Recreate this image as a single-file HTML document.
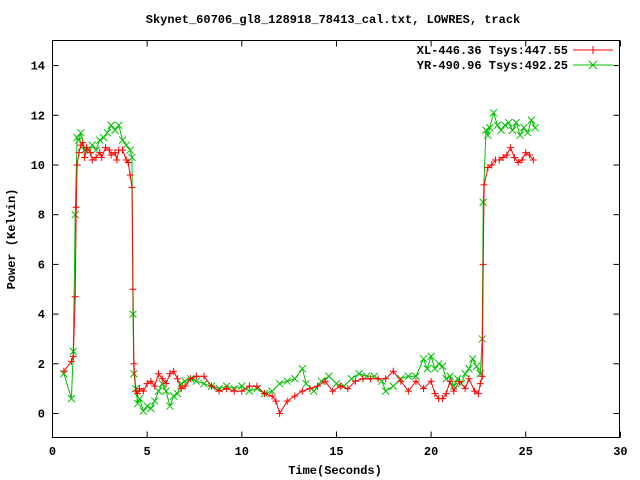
<!DOCTYPE html>
<html><head><meta charset="utf-8"><style>
html,body{margin:0;padding:0;background:#fff;}
svg{display:block;}
text{font-family:"Liberation Mono","DejaVu Sans Mono",monospace;font-size:12px;font-weight:bold;fill:#000;}
</style></head><body>
<svg id="s" width="640" height="480" xmlns="http://www.w3.org/2000/svg">
<rect width="640" height="480" fill="#fff"/>
<text x="333" y="23" text-anchor="middle">Skynet_60706_gl8_128918_78413_cal.txt, LOWRES, track</text>
<text x="335" y="474" text-anchor="middle">Time(Seconds)</text>
<text transform="translate(15,239) rotate(-90)" text-anchor="middle">Power (Kelvin)</text>
<g id="ax" stroke="#000" stroke-width="1" fill="none"></g>
<g id="lab"></g>
<g id="data"></g>
<text x="568" y="54" text-anchor="end">XL-446.36 Tsys:447.55</text>
<text x="568" y="69" text-anchor="end">YR-490.96 Tsys:492.25</text>
</svg>
<script>
var X0=52.5,XS=18.93,Y0=413.5,YS=24.85;
function px(t){return X0+t*XS} function py(v){return Y0-v*YS}
var ns="http://www.w3.org/2000/svg";
function el(p,n,a){var e=document.createElementNS(ns,n);for(var k in a)e.setAttribute(k,a[k]);p.appendChild(e);return e;}
var ax=document.getElementById('ax'),lab=document.getElementById('lab'),dg=document.getElementById('data');
el(ax,'rect',{x:52.5,y:40.5,width:567,height:397});
for(var v=0;v<=14;v+=2){var y=py(v);el(ax,'line',{x1:52.5,y1:y,x2:58.5,y2:y});el(ax,'line',{x1:619.5,y1:y,x2:613.5,y2:y});
var t=el(lab,'text',{x:45,y:y+4,'text-anchor':'end'});t.textContent=v;}
for(var s=0;s<=30;s+=5){var x=px(s);el(ax,'line',{x1:x,y1:437.5,x2:x,y2:431.5});el(ax,'line',{x1:x,y1:40.5,x2:x,y2:46.5});
var t=el(lab,'text',{x:x,y:455,'text-anchor':'middle'});t.textContent=s;}
var red=[0.6,1.7,1.0,2.1,1.1,2.3,1.2,4.7,1.25,8.3,1.3,10.0,1.4,10.5,1.5,10.8,1.6,10.9,1.7,10.3,1.8,10.7,2.0,10.5,2.1,10.2,2.3,10.3,2.5,10.5,2.6,10.3,2.8,10.7,3.0,10.6,3.1,10.4,3.3,10.5,3.4,10.2,3.5,10.6,3.7,10.6,3.9,10.2,4.0,10.1,4.1,9.6,4.2,9.1,4.25,5,4.3,2.0,4.4,0.9,4.5,0.8,4.6,1.0,4.8,0.9,5.0,1.2,5.2,1.3,5.4,1.1,5.6,1.6,5.8,1.4,6.0,1.2,6.2,1.6,6.4,1.7,6.6,1.4,6.8,1.0,7.0,1.1,7.3,1.4,7.6,1.5,8.0,1.5,8.4,1.1,8.8,0.9,9.2,1.0,9.6,0.9,10.0,0.9,10.4,1.1,10.8,1.1,11.2,0.8,11.6,0.7,11.8,0.5,12.0,0.0,12.4,0.5,12.8,0.7,13.2,0.9,13.6,1.0,14.0,1.1,14.4,1.3,14.8,0.9,15.2,1.1,15.6,1.0,16.0,1.3,16.4,1.4,16.8,1.4,17.2,1.4,17.6,1.4,18.0,1.7,18.4,1.3,18.8,0.9,19.2,1.3,19.6,1.0,20.0,1.3,20.2,0.8,20.4,0.6,20.6,0.6,20.8,0.8,21.0,1.3,21.2,0.9,21.5,1.3,21.8,1.0,22.0,1.4,22.3,0.9,22.5,0.8,22.6,1.2,22.7,1.5,22.75,6,22.8,9.2,23.0,9.9,23.2,10.0,23.4,10.2,23.6,10.2,23.8,10.3,24.0,10.4,24.2,10.7,24.4,10.3,24.6,10.1,24.8,10.2,25.0,10.5,25.2,10.4,25.4,10.2];
var grn=[0.6,1.6,1.0,0.6,1.1,2.5,1.2,8,1.3,11.1,1.4,11.0,1.5,11.3,1.7,10.6,1.9,10.6,2.1,10.8,2.3,10.6,2.5,11.0,2.7,11.1,2.9,11.3,3.1,11.6,3.3,11.4,3.5,11.6,3.7,11.0,3.9,10.8,4.1,10.6,4.2,10.3,4.25,4,4.3,1.6,4.4,1.0,4.5,0.4,4.6,0.6,4.8,0.1,5.0,0.3,5.2,0.2,5.4,0.5,5.6,0.9,5.8,1.2,6.0,0.9,6.2,0.3,6.4,0.7,6.6,0.8,6.8,1.2,7.0,1.3,7.3,1.4,7.6,1.3,8.0,1.2,8.4,1.1,8.8,1.0,9.2,1.1,9.6,1.0,10.0,1.1,10.4,0.9,10.8,1.0,11.2,0.8,11.6,0.9,12.0,1.2,12.4,1.3,12.8,1.4,13.2,1.8,13.4,1.2,13.8,0.9,14.2,1.3,14.6,1.5,15.0,1.2,15.4,1.1,15.8,1.4,16.2,1.6,16.6,1.5,17.0,1.5,17.4,1.3,17.6,0.9,18.0,1.1,18.4,1.4,18.8,1.5,19.2,1.5,19.6,2.2,19.8,1.8,20.0,2.3,20.2,1.8,20.4,2.0,20.6,1.9,20.8,1.4,21.0,1.5,21.2,1.1,21.4,1.4,21.6,1.2,21.8,1.6,22.0,1.8,22.2,2.2,22.4,1.9,22.6,1.6,22.7,3,22.75,8.5,22.9,11.4,23.0,11.2,23.1,11.5,23.3,12.1,23.5,11.6,23.7,11.4,23.9,11.6,24.1,11.7,24.3,11.4,24.5,11.7,24.7,11.2,24.9,11.5,25.1,11.3,25.3,11.8,25.5,11.5];
function series(d,col,mk){var pts=[],m='';for(var i=0;i<d.length;i+=2){var x=px(d[i]),y=py(d[i+1]);pts.push(x.toFixed(1)+','+y.toFixed(1));
if(mk=='+')m+='M'+(x-3.5)+' '+y+'h7M'+x+' '+(y-3.5)+'v7';else m+='M'+(x-3.5)+' '+(y-3.5)+'l7 7M'+(x-3.5)+' '+(y+3.5)+'l7 -7';}
el(dg,'polyline',{points:pts.join(' '),fill:'none',stroke:col,'stroke-width':1});
el(dg,'path',{d:m,fill:'none',stroke:col,'stroke-width':1});}
series(grn,'#00c000','x');series(red,'#ff0000','+');
el(dg,'path',{d:'M573 50h40M593 46v8',stroke:'#ff0000',fill:'none'});
el(dg,'path',{d:'M573 65h40M589 61l8 8M589 69l8 -8',stroke:'#00c000',fill:'none'});
</script>
</body></html>
